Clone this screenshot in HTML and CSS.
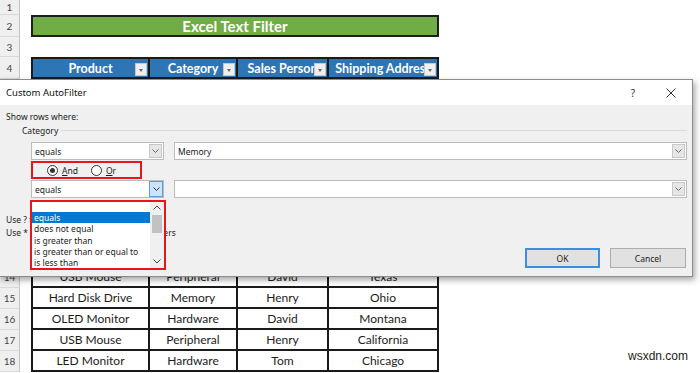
FILE: index.html
```html
<!DOCTYPE html>
<html lang="en">
<head>
  <meta charset="UTF-8" />
  <title>Excel Text Filter</title>
  <link rel="stylesheet" href="styles.css">
</head>
<body>

  <div class="sheet">
    <div class="row r1"><div class="rh">1</div></div>
    <div class="row r2">
      <div class="rh">2</div><div class="col-a"></div>
      <div class="title">Excel Text Filter</div>
    </div>
    <div class="row r3"><div class="rh">3</div></div>
    <div class="row r4">
      <div class="rh">4</div><div class="col-a"></div>
      <div class="cell hd cb"><span>Product</span><i class="fb"></i></div>
      <div class="cell hd cc"><span>Category</span><i class="fb"></i></div>
      <div class="cell hd cd"><span>Sales Person</span><i class="fb"></i></div>
      <div class="cell hd ce"><span>Shipping Address</span><i class="fb"></i></div>
    </div>
    <div class="row skip"><div class="rh"></div></div>
    <div class="row">
      <div class="rh">14</div><div class="col-a"></div>
      <div class="cell cb">USB Mouse</div><div class="cell cc">Peripheral</div>
      <div class="cell cd">David</div><div class="cell ce">Texas</div>
    </div>
    <div class="row">
      <div class="rh">15</div><div class="col-a"></div>
      <div class="cell cb">Hard Disk Drive</div><div class="cell cc">Memory</div>
      <div class="cell cd">Henry</div><div class="cell ce">Ohio</div>
    </div>
    <div class="row">
      <div class="rh">16</div><div class="col-a"></div>
      <div class="cell cb">OLED Monitor</div><div class="cell cc">Hardware</div>
      <div class="cell cd">David</div><div class="cell ce">Montana</div>
    </div>
    <div class="row">
      <div class="rh">17</div><div class="col-a"></div>
      <div class="cell cb">USB Mouse</div><div class="cell cc">Peripheral</div>
      <div class="cell cd">Henry</div><div class="cell ce">California</div>
    </div>
    <div class="row">
      <div class="rh">18</div><div class="col-a"></div>
      <div class="cell cb">LED Monitor</div><div class="cell cc">Hardware</div>
      <div class="cell cd">Tom</div><div class="cell ce">Chicago</div>
    </div>
  </div>

  <div class="dialog">
    <div class="titlebar">
      <span class="dlg-title">Custom AutoFilter</span>
      <span class="tb-btn">?</span>
      <span class="tb-btn">
        <svg width="10" height="10" viewBox="0 0 10 10"><path d="M0.5 0.5 L9.5 9.5 M9.5 0.5 L0.5 9.5" stroke="#333" stroke-width="1" fill="none"/></svg>
      </span>
    </div>
    <div class="dlg-body">
      <div class="show">Show rows where:</div>
      <div class="group"><span>Category</span><div class="line"></div></div>

      <div class="crit">
        <div class="combo">
          <span class="txt">equals</span>
          <span class="btn"><svg width="7" height="4" viewBox="0 0 7 4"><path d="M0.5 0.5 L3.5 3.5 L6.5 0.5" stroke="#666" fill="none"/></svg></span>
        </div>
        <div class="combo value">
          <span class="txt">Memory</span>
          <span class="btn"><svg width="7" height="4" viewBox="0 0 7 4"><path d="M0.5 0.5 L3.5 3.5 L6.5 0.5" stroke="#666" fill="none"/></svg></span>
        </div>
      </div>

      <div class="logic">
        <span class="radio on"></span><label><u>A</u>nd</label>
        <span class="radio or"></span><label><u>O</u>r</label>
      </div>

      <div class="crit">
        <div class="combo">
          <span class="txt">equals</span>
          <span class="btn active"><svg width="7" height="4" viewBox="0 0 7 4"><path d="M0.5 0.5 L3.5 3.5 L6.5 0.5" stroke="#333" fill="none"/></svg></span>
        </div>
        <div class="combo value">
          <span class="txt"></span>
          <span class="btn"><svg width="7" height="4" viewBox="0 0 7 4"><path d="M0.5 0.5 L3.5 3.5 L6.5 0.5" stroke="#666" fill="none"/></svg></span>
        </div>
      </div>

      <div class="hints">
        <div>Use ? to represent any single character</div>
        <div>Use * to represent any series of characters</div>
      </div>

      <div class="actions">
        <button class="ok">OK</button>
        <button>Cancel</button>
      </div>
    </div>

    <div class="droplist">
      <div class="items">
        <div class="item sel">equals</div>
        <div class="item">does not equal</div>
        <div class="item">is greater than</div>
        <div class="item">is greater than or equal to</div>
        <div class="item">is less than</div>
      </div>
      <div class="scroll">
        <svg class="up" width="8" height="5" viewBox="0 0 8 5"><path d="M0.5 4.5 L4 1 L7.5 4.5" stroke="#444" fill="none"/></svg>
        <div class="thumb"></div>
        <svg class="down" width="8" height="5" viewBox="0 0 8 5"><path d="M0.5 0.5 L4 4 L7.5 0.5" stroke="#444" fill="none"/></svg>
      </div>
    </div>
  </div>

  <div class="mark">wsxdn.com</div>

</body>
</html>
```

FILE: styles.css
```css
body {
  margin: 0;
  background: #fff;
  font-family: Lato, "Liberation Sans", sans-serif;
  width: 700px;
  height: 373px;
  overflow: hidden;
  position: relative;
}
.sheet {
  width: 700px;
}
.row {
  display: flex;
  height: 21px;
}
.r1 { height: 15px; }
.r2 { height: 22px; }
.r3 { height: 20px; }
.r4 { height: 22px; }
.skip { height: 188px; }
.rh {
  width: 20px;
  flex: none;
  box-sizing: border-box;
  background: #efefef;
  border-right: 1px solid #c6c6c6;
  border-bottom: 1px solid #d8d8d8;
  color: #444;
  font-size: 10px;
  display: flex;
  align-items: center;
  justify-content: center;
}
.col-a {
  width: 11px;
  flex: none;
}
.title {
  width: 408px;
  box-sizing: border-box;
  background: #70ad47;
  border: 2px solid #1e1e1e;
  color: #fff;
  font-weight: bold;
  font-size: 15px;
  display: flex;
  align-items: center;
  justify-content: center;
}
.cell {
  flex: none;
  box-sizing: border-box;
  border-right: 2px solid #1a1a1a;
  border-bottom: 2px solid #1a1a1a;
  display: flex;
  align-items: center;
  justify-content: center;
  font-size: 12px;
  color: #1c1c1c;
  white-space: nowrap;
  overflow: hidden;
  position: relative;
}
.cb { width: 119px; border-left: 2px solid #1a1a1a; }
.cc { width: 88px; }
.cd { width: 91px; }
.ce { width: 110px; }
.hd {
  border-top: 2px solid #1a1a1a;
  background: #2e75b6;
  color: #fff;
  font-weight: bold;
  font-size: 12.5px;
}
.fb {
  position: absolute;
  right: 1px;
  bottom: 1px;
  width: 12px;
  height: 13px;
  box-sizing: border-box;
  background: #efefef;
  border: 1px solid #c8c8c8;
}
.fb::after {
  content: "";
  position: absolute;
  left: 3px;
  top: 5px;
  border-left: 2.5px solid transparent;
  border-right: 2.5px solid transparent;
  border-top: 3px solid #666;
}

/* dialog */
.dialog {
  position: absolute;
  left: -1px;
  top: 79px;
  width: 694px;
  height: 198px;
  box-sizing: border-box;
  border: 1px solid #8c8c8c;
  background: #f0f0f0;
  box-shadow: 2px 3px 6px rgba(0, 0, 0, 0.35);
  font-family: "Noto Sans", "Open Sans", sans-serif;
  font-size: 8.5px;
  color: #1a1a1a;
}
.titlebar {
  height: 25px;
  background: #fff;
  display: flex;
  align-items: center;
  padding: 0 2px 0 6px;
}
.dlg-title {
  flex: 1;
  font-size: 9.5px;
  color: #111;
}
.tb-btn {
  width: 38px;
  text-align: center;
  font-size: 10px;
  color: #333;
  display: flex;
  justify-content: center;
}
.dlg-body {
  padding: 0 5px 0 6px;
}
.show {
  margin-top: 6px;
  height: 12px;
  line-height: 12px;
}
.group {
  height: 14px;
  display: flex;
  align-items: center;
}
.group span {
  margin-left: 16px;
}
.group .line {
  flex: 1;
  height: 1px;
  background: #dcdcdc;
  margin-left: 3px;
}
.crit {
  margin-top: 5px;
  height: 18px;
  display: flex;
  padding-left: 25px;
}
.logic + .crit {
  margin-top: 1px;
}
.combo {
  width: 133px;
  box-sizing: border-box;
  border: 1px solid #bcbcbc;
  background: #fff;
  display: flex;
  align-items: stretch;
}
.combo.value {
  flex: 1;
  margin-left: 10px;
}
.combo .txt {
  flex: 1;
  padding-left: 3px;
  display: flex;
  align-items: center;
}
.combo .btn {
  width: 13px;
  margin: 1px;
  box-sizing: border-box;
  background: #e6e6e6;
  border: 1px solid #c8c8c8;
  display: flex;
  align-items: center;
  justify-content: center;
}
.combo .btn.active {
  margin: 0;
  width: 14px;
  background: #cce4f7;
  border: 1px solid #569de5;
}
.logic {
  margin: 1px 0 0 25px;
  width: 111px;
  height: 18px;
  box-sizing: border-box;
  border: 2px solid #e8151b;
  display: flex;
  align-items: center;
  padding-left: 14px;
}
.radio {
  width: 11px;
  height: 11px;
  box-sizing: border-box;
  border: 1px solid #333;
  border-radius: 50%;
  background: #fff;
  position: relative;
}
.radio.on::after {
  content: "";
  position: absolute;
  left: 2px;
  top: 2px;
  width: 5px;
  height: 5px;
  border-radius: 50%;
  background: #333;
}
.radio.or {
  margin-left: 13px;
}
.logic label {
  margin-left: 4px;
}
.hints {
  margin-top: 15px;
  line-height: 13px;
}
.actions {
  margin-top: 9px;
  display: flex;
  justify-content: flex-end;
  gap: 10px;
  padding-right: 1px;
}
.actions button {
  width: 76px;
  height: 20px;
  box-sizing: border-box;
  background: #e1e1e1;
  border: 1px solid #adadad;
  font-family: "Noto Sans", "Open Sans", sans-serif;
  font-size: 8.5px;
  color: #1a1a1a;
  padding: 0;
}
.actions button.ok {
  width: 75px;
  border: 2px solid #3d8ee0;
}

/* open dropdown of the second operator */
.droplist {
  position: absolute;
  left: 30px;
  top: 120px;
  width: 136px;
  height: 70px;
  box-sizing: border-box;
  border: 2px solid #e8151b;
  background: #fff;
  display: flex;
}
.items {
  flex: 1;
  padding-top: 10px;
}
.item {
  height: 11.3px;
  line-height: 11.3px;
  padding-left: 2px;
  white-space: nowrap;
}
.item.sel {
  background: #0078d7;
  color: #fff;
}
.scroll {
  width: 14px;
  background: #f0f0f0;
  display: flex;
  flex-direction: column;
  align-items: center;
}
.scroll .up {
  margin-top: 3px;
}
.scroll .thumb {
  width: 10px;
  height: 18px;
  margin-top: 5px;
  background: #c2c2c2;
}
.scroll .down {
  margin-top: auto;
  margin-bottom: 4px;
}

.mark {
  position: absolute;
  right: 12px;
  top: 349px;
  font-family: "Liberation Sans", sans-serif;
  font-size: 12px;
  color: #222;
}
```
